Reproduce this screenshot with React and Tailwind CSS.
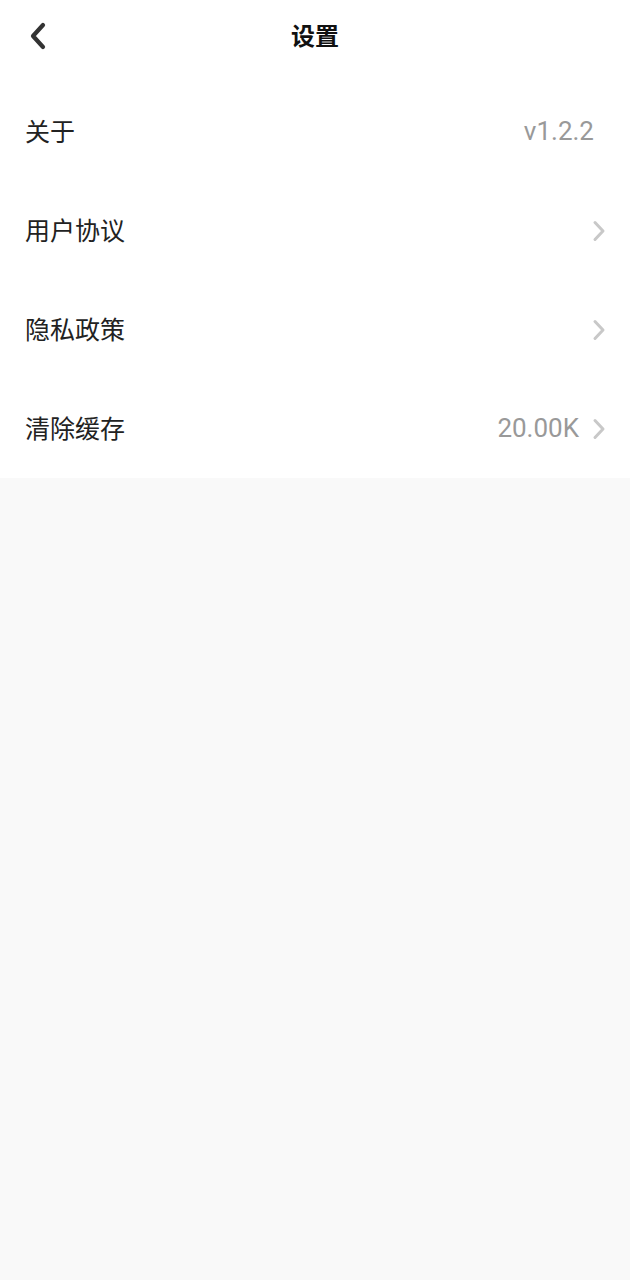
const rows = [
  { label: "关于", value: "v1.2.2", arrow: false },
  { label: "用户协议", value: "", arrow: true },
  { label: "隐私政策", value: "", arrow: true },
  { label: "清除缓存", value: "20.00K", arrow: true },
];

const Chevron = () => (
  <svg width="14" height="22" viewBox="0 0 14 22" fill="none" className="shrink-0">
    <path d="M3 2.5l8 8.5-8 8.5" stroke="#c8c8c8" strokeWidth="3" strokeLinecap="round" strokeLinejoin="round" />
  </svg>
);

const App = () => {
  return (
    <div
      className="min-h-screen bg-[#f9f9f9]"
      style={{ fontFamily: '"Noto Sans", "Noto Sans CJK SC", sans-serif' }}
    >
      <div className="bg-white">
        <header className="relative h-[72px] flex items-center justify-center">
          <button className="absolute left-[24px] top-[20px] w-[28px] h-[32px] flex items-center justify-center">
            <svg width="20" height="28" viewBox="0 0 20 28" fill="none">
              <path d="M15 3L5 14l10 11" stroke="#333333" strokeWidth="4.2" strokeLinecap="round" strokeLinejoin="round" />
            </svg>
          </button>
          <h1 className="text-[24px] font-bold text-[#111]">设置</h1>
        </header>

        <div className="pt-[10px]">
          {rows.map((row) => (
            <div key={row.label} className="h-[99px] flex items-center justify-between pl-[25px] pr-[24px]">
              <span className="text-[25px] text-[#222]">{row.label}</span>
              <div className="flex items-center gap-[13px]">
                {row.value && (
                  <span
                    className={`text-[26px] text-[#999] ${row.arrow ? "" : "mr-[12px]"}`}
                    style={{ fontFamily: "Roboto, sans-serif" }}
                  >
                    {row.value}
                  </span>
                )}
                {row.arrow && <Chevron />}
              </div>
            </div>
          ))}
        </div>
      </div>
    </div>
  );
};

export default App;
